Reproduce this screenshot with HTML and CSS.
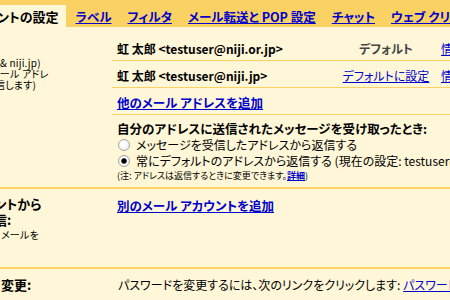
FILE: index.html
```html
<!DOCTYPE html>
<html lang="ja">
<head>
<meta charset="utf-8">
<title>アカウントの設定</title>
<link rel="stylesheet" href="styles.css">
</head>
<body>
<div class="page">
  <nav class="tabs">
    <span class="tab tab-active">ントの設定</span>
    <a class="tab" href="#">ラベル</a>
    <a class="tab" href="#">フィルタ</a>
    <a class="tab" href="#">メール転送と POP 設定</a>
    <a class="tab" href="#">チャット</a>
    <a class="tab" href="#">ウェブ クリップ</a>
  </nav>

  <section class="sec sec-send">
    <div class="label label-send">
      <div class="small-line">&amp; niji.jp)</div>
      <div class="small-line cut-a">メール アドレ</div>
      <div class="small-line cut-b">信します)</div>
    </div>
    <div class="body body-send">
      <div class="addr-row">
        <span class="addr-name">虹 太郎 &lt;testuser@niji.or.jp&gt;</span>
        <span class="addr-status"><span class="default-text">デフォルト</span></span>
        <a class="addr-edit" href="#">情報を編集</a>
      </div>
      <div class="addr-row">
        <span class="addr-name">虹 太郎 &lt;testuser@niji.jp&gt;</span>
        <span class="addr-status"><a href="#">デフォルトに設定</a></span>
        <a class="addr-edit" href="#">情報を編集</a>
      </div>
      <div class="addr-row add-row">
        <a class="strong-link" href="#">他のメール アドレスを追加</a>
      </div>
      <div class="reply">
        <div class="reply-title">自分のアドレスに送信されたメッセージを受け取ったとき:</div>
        <label class="opt"><input type="radio" name="reply">メッセージを受信したアドレスから返信する</label>
        <label class="opt"><input type="radio" name="reply" checked>常にデフォルトのアドレスから返信する (現在の設定: testuser@niji.or.jp)</label>
        <div class="hint">(注: アドレスは返信するときに変更できます。<a href="#">詳細</a>)</div>
      </div>
    </div>
  </section>

  <section class="sec sec-fetch">
    <div class="label label-fetch">
      <div class="big-line cut-c">アントから</div>
      <div class="big-line cut-d">信:</div>
      <div class="small-line">メールを</div>
    </div>
    <div class="body body-fetch">
      <a class="strong-link" href="#">別のメール アカウントを追加</a>
    </div>
  </section>

  <section class="sec sec-pass">
    <div class="label label-pass">
      <div class="big-line">変更:</div>
    </div>
    <div class="body body-pass">
      パスワードを変更するには、次のリンクをクリックします: <a href="#">パスワードを変更する</a>
    </div>
  </section>
</div>
</body>
</html>
```

FILE: styles.css
```css
html, body {
  margin: 0;
  padding: 0;
  width: 450px;
  height: 300px;
  overflow: hidden;
  background: #fff7d7;
}

.page {
  font-family: "Noto Sans CJK JP", "Liberation Sans", sans-serif;
  font-feature-settings: "palt";
  font-size: 12px;
  color: #000;
  white-space: nowrap;
}

a {
  color: #0000cc;
  text-decoration: underline;
}

/* Tabs */
.tabs {
  display: flex;
  align-items: flex-end;
  height: 27px;
  background: #fad163;
  overflow: hidden;
}

.tab {
  display: block;
  height: 22px;
  padding: 3px 8px 0;
  box-sizing: border-box;
  font-size: 12.5px;
  font-weight: bold;
  line-height: 17px;
  flex: none;
}

.tab-active {
  background: #fff7d7;
  color: #000;
  font-size: 13px;
  margin-left: -3px;
  padding-left: 0;
  padding-right: 7px;
  margin-right: 2px;
}

/* Sections */
.sec {
  display: grid;
  grid-template-columns: 112px 1fr;
  border-bottom: 2px solid #fad163;
  overflow: hidden;
}

.label {
  overflow: hidden;
}

.small-line {
  font-size: 10px;
  line-height: 11px;
  letter-spacing: 0.2px;
}

.big-line {
  font-size: 13px;
  font-weight: bold;
  line-height: 16px;
}

.cut-a { margin-left: -9px; }
.cut-b { margin-left: -5px; }
.cut-c { margin-left: -17px; }
.cut-d { margin-left: -6px; }

.label-send { padding-top: 30px; }
.label-fetch { padding-top: 7px; }
.label-fetch .small-line { line-height: 14px; margin-left: 1px; }
.label-pass { padding-top: 8px; padding-left: 1px; }

.body {
  overflow: hidden;
}

.body-send { padding-top: 7px; }

.addr-row {
  display: grid;
  grid-template-columns: 219px 100px max-content;
  align-items: start;
  height: 27px;
  padding: 7px 0 0 5px;
  box-sizing: border-box;
  border-bottom: 1px solid #fad163;
  line-height: 16px;
}

.add-row {
  display: block;
}

.addr-name {
  font-size: 12px;
  font-weight: bold;
}

.addr-status {
  text-align: center;
  font-size: 12px;
}

.default-text {
  font-weight: bold;
  color: #444;
  font-size: 12px;
}

.addr-edit {
  padding-left: 5px;
  font-size: 12px;
}

.strong-link {
  font-size: 12.5px;
  font-weight: bold;
  line-height: 16px;
}

.reply {
  padding: 6px 0 4px 5px;
}

.reply-title {
  font-size: 12.5px;
  font-weight: bold;
  line-height: 16px;
}

.opt {
  display: flex;
  align-items: center;
  height: 16px;
  line-height: 16px;
  font-size: 12px;
}

.opt input {
  appearance: none;
  -webkit-appearance: none;
  width: 12px;
  height: 12px;
  margin: 0 6px 0 1px;
  border: 1px solid #a4a4a4;
  border-radius: 50%;
  box-sizing: border-box;
  background: radial-gradient(circle at 40% 40%, #ffffff 30%, #e2e2e2 100%);
  flex: none;
}

.opt input:checked {
  background: radial-gradient(circle at 50% 50%, #000 0, #000 2px, #555 2.6px, #fff 3.2px, #e2e2e2 100%);
}

.hint {
  font-size: 9px;
  line-height: 14px;
}

.hint a {
  font-weight: bold;
}

.sec-fetch {
  height: 80px;
  box-sizing: border-box;
}

.body-fetch {
  padding: 8px 0 0 5px;
}

.sec-pass {
  border-bottom: none;
}

.body-pass {
  padding: 8px 0 0 6px;
  line-height: 16px;
  font-size: 12px;
}
```
